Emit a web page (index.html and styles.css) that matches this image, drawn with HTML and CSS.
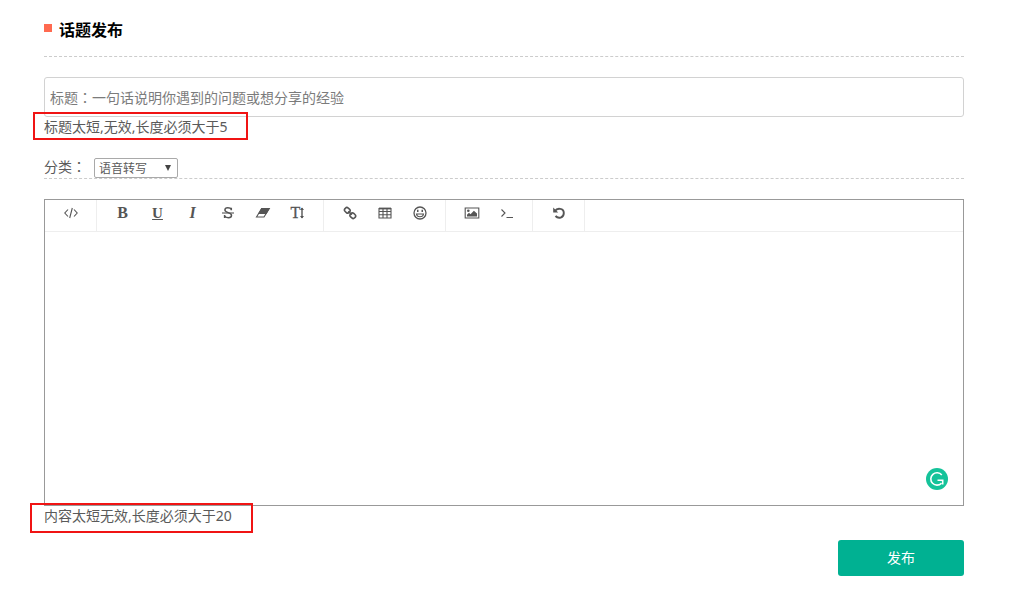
FILE: index.html
```html
<!DOCTYPE html>
<html lang="zh-CN">
<head>
<meta charset="utf-8">
<title>话题发布</title>
<link rel="stylesheet" href="styles.css">
</head>
<body>
<main class="page">
  <header class="heading"><span class="marker"></span><h1>话题发布</h1></header>
  <div class="title-field">标题<span class="colon" lang="zh-TW">：</span>一句话说明你遇到的问题或想分享的经验</div>
  <p class="error error-title">标题太短,无效,长度必须大于5</p>
  <div class="category">
    <span class="label">分类<span class="colon" lang="zh-TW">：</span></span>
    <div class="select"><span>语音转写</span><svg width="6" height="6" viewBox="0 0 6 6"><path d="M0 0h6L3 6z" fill="#444"/></svg></div>
  </div>
  <section class="editor">
    <div class="toolbar">
      <div class="group">
        <span class="tool"><svg width="14" height="12" viewBox="0 0 14 12"><path d="M4 2.500L.8 6 4 9.500M10 2.500L13.200 6 10 9.500M8.300 1L5.700 11"/></svg></span>
      </div>
      <div class="group">
        <span class="tool letter bold">B</span>
        <span class="tool letter underline">U</span>
        <span class="tool letter italic">I</span>
        <span class="tool"><svg width="14" height="14" viewBox="0 0 14 14"><path d="M10.300 4.300V1.700M10.300 3.500C9.500 1.500 4 .8 3.900 4c0 2.900 6.600 2.300 6.600 5.200 0 3.500-5.800 3.100-6.900.5M3.600 9v3" stroke-width="1.500"/><path d="M1 7h12"/></svg></span>
        <span class="tool"><svg width="16" height="12" viewBox="0 0 16 12"><path d="M6.700 1.500h7.600L9 10H1.500z"/><path class="solid" d="M6.400 1h8.500L11.500 7H3z"/></svg></span>
        <span class="tool letter size">T<svg width="4" height="12" viewBox="0 0 4 12"><path d="M2 1v10" stroke-width="1.400"/><path class="solid" d="M0 3L2 .5 4 3zM0 9l2 2.500L4 9z"/></svg></span>
      </div>
      <div class="group">
        <span class="tool"><svg width="14" height="14" viewBox="0 0 14 14"><g stroke-width="1.600"><rect x="1.500" y="2" width="5.600" height="4.600" rx="2" transform="rotate(42 4.300 4.300)"/><rect x="7" y="7.400" width="5.600" height="4.600" rx="2" transform="rotate(42 9.800 9.700)"/><path d="M5.300 5.300l3.500 3.500"/></g></svg></span>
        <span class="tool"><svg width="14" height="12" viewBox="0 0 14 12"><path d="M1 1.500h12v9.500H1zM1 4.500h12M1 7.700h12M5 1.500v9.500M9 1.500v9.500"/><path d="M1 1.500h12" stroke-width="1.800"/></svg></span>
        <span class="tool"><svg width="14" height="14" viewBox="0 0 14 14"><circle cx="7" cy="7" r="6" stroke-width="1.300"/><path class="solid" d="M4 3.700h1.500v2.300H4zM8.500 3.700H10v2.300H8.500z"/><path d="M3.500 8h7c-.5 3.700-6.500 3.700-7 0z"/></svg></span>
      </div>
      <div class="group">
        <span class="tool"><svg width="16" height="12" viewBox="0 0 16 12"><path d="M1.200 1h13.600v10H1.200z"/><path class="solid" d="M3 9.500V7.700l2-1.900 1.500 1.400 3.400-3.500L13 6.500v3z"/><circle class="solid" cx="4.300" cy="3.700" r="1.300"/></svg></span>
        <span class="tool"><svg width="14" height="12" viewBox="0 0 14 12"><path d="M1.500 2.500L5 6 1.500 9.500M6.500 10.500h6.500"/></svg></span>
      </div>
      <div class="group">
        <span class="tool"><svg width="14" height="12" viewBox="0 0 14 12"><path d="M3 4C5 .6 11.800 1 11.800 6c0 4.900-5.500 6.200-8.300 3" stroke-width="1.900"/><path class="solid" d="M1.200.5v5h5z"/></svg></span>
      </div>
    </div>
    <div class="content">
      <svg class="assistant" width="22" height="22" viewBox="0 0 22 22"><circle cx="11" cy="11" r="11" fill="#15c39a"/><path d="M15.800 7A6.200 6.200 0 1 0 15.500 15.200M11.500 12.300h5.200v4.200" fill="none" stroke="#fff" stroke-width="1.600"/></svg>
    </div>
  </section>
  <p class="error error-content">内容太短无效,长度必须大于20</p>
  <button class="submit" type="button">发布</button>
</main>
</body>
</html>
```
FILE: styles.css
```css
*, *::after { box-sizing: border-box; }
body {
  margin: 0;
  background: #fff;
  color: #5a5a5a;
  font: 14px/20px "Noto Sans", "Noto Sans CJK SC", sans-serif;
}
.page {
  width: 920px;
  margin-left: 44px;
  display: flex;
  flex-direction: column;
}
.colon { font-family: "Noto Sans CJK TC", sans-serif; line-height: 1; }
.heading {
  height: 57px;
  padding-top: 20px;
  display: flex;
  align-items: flex-start;
  gap: 7px;
  border-bottom: 1px dashed #ccc;
}
.marker { width: 8px; height: 8px; margin-top: 4px; background: #ff6a50; }
h1 { margin: 0; color: #000; font-size: 16px; line-height: 20px; font-weight: 700; }
.title-field {
  height: 40px;
  margin-top: 20px;
  padding: 0 5px;
  border: 1px solid #d2d2d2;
  border-radius: 3px;
  color: #7b7b7b;
  line-height: 40px;
}
.error { position: relative; margin: 0; height: 20px; }
.error::after {
  content: "";
  position: absolute;
  border: 2px solid #f01414;
}
.error-title::after { left: -11px; top: -5px; width: 215px; height: 28px; }
.error-content::after { left: -14px; top: -3px; width: 223px; height: 30px; }
.category {
  height: 22px;
  margin-top: 20px;
  display: flex;
  align-items: flex-start;
  gap: 8px;
  border-bottom: 1px dashed #ccc;
}
.label { line-height: 20px; }
.select {
  width: 84px;
  height: 20px;
  margin-top: 1px;
  padding: 0 6px 0 4px;
  display: flex;
  align-items: center;
  justify-content: space-between;
  border: 1px solid #a9a9a9;
  border-radius: 2px;
  font-size: 12px;
  line-height: 18px;
}
.select span { padding-top: 1px; }
.editor {
  height: 307px;
  margin-top: 20px;
  display: flex;
  flex-direction: column;
  border: 1px solid #999;
}
.toolbar { height: 32px; display: flex; border-bottom: 1px solid #eee; }
.group { display: flex; padding: 0 8px; border-right: 1px solid #eee; }
.tool {
  width: 35px;
  height: 26px;
  display: flex;
  align-items: center;
  justify-content: center;
  color: #555;
}
.tool svg { fill: none; stroke: #555; stroke-width: 1.1; }
.tool .solid { fill: #555; stroke: none; }
.letter { font: 16px/28px "Liberation Serif", serif; }
.bold { font-weight: 700; }
.underline { font-size: 15px; font-weight: 700; text-decoration: underline; text-decoration-thickness: 1px; }
.italic { font-style: italic; font-weight: 700; }
.size { -webkit-text-stroke: 0.3px #555; }
.content { flex: 1; display: flex; align-items: flex-end; justify-content: flex-end; padding: 15px; }
.submit {
  align-self: flex-end;
  width: 126px;
  height: 36px;
  margin-top: 14px;
  border: 0;
  border-radius: 3px;
  background: #00b192;
  color: #fff;
  font: inherit;
}
```
